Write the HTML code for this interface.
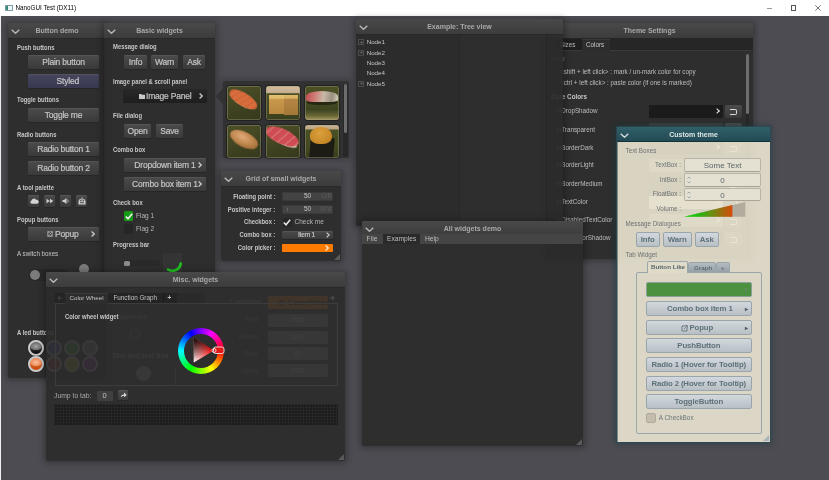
<!DOCTYPE html>
<html><head><meta charset="utf-8">
<style>
*{box-sizing:border-box;margin:0;padding:0}
html,body{width:829px;height:480px;overflow:hidden}
body{position:relative;background:#4d4c52;font-family:"Liberation Sans",sans-serif}
.a{position:absolute}
#tb{position:absolute;left:0;top:0;width:829px;height:16px;background:#fff}
#lb{position:absolute;left:0;top:16px;width:1px;height:464px;background:#f0f0f0}
.w{position:absolute;background:rgba(43,43,43,0.92);border-radius:1.5px;box-shadow:0 0.5px 6px 1.5px rgba(0,0,0,0.3)}
.h{position:absolute;left:0;top:0;right:0;height:15.5px;background:linear-gradient(#494949,#3c3c3c);border-bottom:1px solid #282828;color:#a9a9a9;font-weight:bold;font-size:7px;line-height:15px;text-align:center;border-radius:1.5px 1.5px 0 0;white-space:nowrap}
.chev{position:absolute;left:2.5px;top:5.5px}
.b{position:absolute;background:linear-gradient(#4b4b4b,#3a3a3a);border-radius:1.5px;box-shadow:inset 0 1px 0 rgba(95,95,95,0.55),0 1px 0 #262626;color:#c4c4c4;font-size:8.5px;text-align:center;white-space:nowrap;-webkit-text-stroke:0.2px #c4c4c4;letter-spacing:-0.2px}
.b.sty{background:linear-gradient(#46465f,#383850)}
.b.push{background:linear-gradient(#282828,#1e1e1e);box-shadow:none}
.l{position:absolute;color:#c6c6c6;font-weight:bold;font-size:6.6px;line-height:10px;white-space:nowrap;transform:scaleX(0.89);transform-origin:0 0}
.l.r{font-weight:normal;font-size:7px}
.rt{text-align:right}
.l.rt{transform-origin:100% 0}
.t{position:absolute;white-space:nowrap;line-height:10px}
.txt{color:#b8b8b8;font-size:6.5px}
.led{position:absolute;width:15.5px;height:15.5px;border-radius:50%;border:2px solid #cacaca;box-shadow:0 0 1px 0.5px rgba(0,0,0,0.4)}
.led.dim{border-color:#c8c8c8}
.tbx{position:absolute;background:#434343;border-radius:1px;font-size:6.5px;line-height:8.5px;box-shadow:inset 0 0 0 0.6px #333}
.sb{filter:blur(0.5px)}
.img{position:absolute;width:34px;height:33.5px;border-radius:3px;overflow:hidden;box-shadow:0 0 1px 1px rgba(0,0,0,0.35)}
.img::after{content:"";position:absolute;left:0;top:0;right:0;bottom:0;border-radius:3px;box-shadow:inset 0 0 0 0.8px rgba(160,155,120,0.55)}
.grid{position:absolute;background-color:#1c1c1c;background-image:linear-gradient(90deg,rgba(50,50,50,0.4) 1px,transparent 1px),linear-gradient(rgba(50,50,50,0.4) 1px,transparent 1px);background-size:3px 3px}
.tsl{left:10px;font-size:6.3px;color:#bdbdbd}
.cbx{position:absolute;left:103.2px;width:74.3px;height:13px;border-radius:1px}
.cbx::after{content:"";position:absolute;right:4px;top:4px;width:3px;height:3px;border-right:1.3px solid #e8e8e8;border-top:1.3px solid #e8e8e8;transform:rotate(45deg)}
.rbx{position:absolute;left:178.5px;width:17.5px;height:13.5px;border-radius:2px;background:linear-gradient(#4b4b4b,#3a3a3a)}
.rbx::after{content:"";position:absolute;left:5px;top:4.5px;width:6px;height:4px;border:1.2px solid #d8d8d8;border-left:none;border-radius:0 2px 2px 0}
.pb{position:absolute;width:6px;height:6px;border:0.8px solid #4c4c4c;background:linear-gradient(#606060,#606060) center/3px 0.8px no-repeat,linear-gradient(#606060,#606060) center/0.8px 3px no-repeat}
.tn{left:10.7px;font-size:6.2px;color:#c8c8c8}
.ct{background:rgba(236,230,211,0.9);box-shadow:inset 0.8px 0 0 #6a7a7a,0 0 0 0.8px #2e4850,0 0 5px 2px rgba(20,55,65,0.5)}
.ctl{font-size:6.3px;color:#6c7272}
.ctb{position:absolute;background:#e4e0d2;border:1px solid #b9b4a6;border-bottom-color:#a8a396;border-radius:2px;color:#5a6668}
.spin{position:absolute;left:2.5px;top:2.5px}
.cbt{position:absolute;background:linear-gradient(#d2d8dc,#b8c0c6);border:1px solid #98a6ac;border-radius:2px;color:#5e7078;font-size:7.8px;font-weight:bold;text-align:center;letter-spacing:-0.12px;white-space:nowrap}
</style></head><body>
<div id="root" style="position:absolute;left:0;top:0;width:829px;height:480px;will-change:transform;overflow:hidden">
<div id="tb">
  <div class="a" style="left:5px;top:5px;width:8px;height:5.5px;border:0.8px solid #7f9aa8;background:linear-gradient(90deg,#3a8a70 35%,#f0f4f6 35%)"></div>
  <div class="t" style="left:15.5px;top:2.5px;font-size:6.3px;color:#000">NanoGUI Test (DX11)</div>
  <div class="a" style="left:767px;top:7.5px;width:5px;height:0.9px;background:#9a9a9a"></div>
  <div class="a" style="left:791px;top:5.3px;width:5.3px;height:5.3px;border:0.8px solid #555"></div>
  <svg class="a" style="left:815px;top:5px" width="6" height="6" viewBox="0 0 6 6"><path d="M0.3 0.3 L5.7 5.7 M5.7 0.3 L0.3 5.7" stroke="#555" stroke-width="0.8"/></svg>
</div>
<div id="lb"></div>
<!-- Button demo -->
<div class="w" style="left:8px;top:23px;width:98px;height:355px">
  <div class="h"><svg class="chev" width="9" height="5" viewBox="0 0 9 5"><polyline points="0.7,0.7 4.5,4.3 8.3,0.7" fill="none" stroke="#bcbcbc" stroke-width="1.3"/></svg>Button demo</div>
  <div class="l" style="left:9px;top:19.5px">Push buttons</div>
  <div class="b" style="left:20px;top:32px;width:71px;height:14px;line-height:14px">Plain button</div>
  <div class="b sty" style="left:20px;top:51px;width:71px;height:14px;line-height:14px">&nbsp;&nbsp;&nbsp;&nbsp;Styled</div>
  <div class="l" style="left:9px;top:72px">Toggle buttons</div>
  <div class="b" style="left:20px;top:85px;width:71px;height:14px;line-height:14px">Toggle me</div>
  <div class="l" style="left:9px;top:106.5px">Radio buttons</div>
  <div class="b" style="left:20px;top:119px;width:71px;height:14px;line-height:14px">Radio button 1</div>
  <div class="b" style="left:20px;top:138px;width:71px;height:14px;line-height:14px">Radio button 2</div>
  <div class="l" style="left:9px;top:159.5px">A tool palette</div>
  <div class="b" style="left:20px;top:172px;width:11px;height:12px"><svg class="a" style="left:1.5px;top:3px" width="9" height="6" viewBox="0 0 9 6"><path d="M1.8 5.8 A1.7 1.7 0 0 1 1.6 2.5 A2.4 2.4 0 0 1 6 1.8 A2 2 0 0 1 7.2 5.8 Z" fill="#d4d4d4"/></svg></div>
  <div class="b" style="left:36px;top:172px;width:11px;height:12px"><svg class="a" style="left:2px;top:3px" width="8" height="6" viewBox="0 0 8 6"><path d="M0.5 0.8 L3.8 3 L0.5 5.2Z M4 0.8 L7.3 3 L4 5.2Z" fill="#d0d0d0"/></svg></div>
  <div class="b" style="left:52px;top:172px;width:11px;height:12px"><svg class="a" style="left:2px;top:3px" width="8" height="6" viewBox="0 0 8 6"><path d="M0.5 2 H2 L4.5 0 V6 L2 4 H0.5Z" fill="#d0d0d0"/><path d="M5.5 1.5 Q7 3 5.5 4.5" fill="none" stroke="#aaa" stroke-width="1"/></svg></div>
  <div class="b" style="left:68px;top:172px;width:11px;height:12px"><svg class="a" style="left:1.5px;top:2px" width="8" height="8" viewBox="0 0 8 8"><path d="M0.5 4 L1.8 2 H2.8 V3 H2.3 L1.5 4.3 H6.5 L5.7 3 H5.2 V2 H6.2 L7.5 4 V7.5 H0.5Z M2 5.2 V6.3 H6 V5.2Z" fill="#d4d4d4" fill-rule="evenodd"/><path d="M4 0.3 V3.6 M2.8 2.4 L4 3.6 L5.2 2.4" fill="none" stroke="#d4d4d4" stroke-width="0.9"/></svg></div>
  <div class="l" style="left:9px;top:191.5px">Popup buttons</div>
  <div class="b" style="left:20px;top:204px;width:71px;height:14px;line-height:14px"><svg class="a" style="left:18.8px;top:4px" width="6" height="6" viewBox="0 0 6 6"><path d="M3.2 0.9 H0.9 V5.1 H5.1 V2.8" fill="none" stroke="#aaaaaa" stroke-width="1.1"/><path d="M2.6 3.4 L5.4 0.6 M3.6 0.6 H5.4 V2.4" fill="none" stroke="#aaaaaa" stroke-width="0.9"/></svg><span class="a" style="left:27px;top:0">Popup</span><svg class="a" style="left:63px;top:4px" width="4" height="6" viewBox="0 0 4 6"><polyline points="0.6,0.6 3.2,3 0.6,5.4" fill="none" stroke="#c8c8c8" stroke-width="1.3"/></svg></div>
  <div class="l r" style="left:9px;top:225.5px">A switch boxes</div>
  <div class="a" style="left:20.5px;top:246px;width:40px;height:12px;border-radius:6px;background:#282828"></div>
  <div class="a" style="left:21.5px;top:247px;width:10px;height:10px;border-radius:5px;background:#7c7c7c"></div>
  
  <div class="a" style="left:71px;top:241px;width:10px;height:10px;border-radius:5px;background:#7c7c7c"></div>
  <div class="l" style="left:9px;top:305px">A led buttons</div>
  <div class="led" style="left:20px;top:317px;background:radial-gradient(ellipse 62% 42% at 50% 36%,#a4a4a4,#6c6c6c 75%,transparent 80%),linear-gradient(#5a5a5a,#111 90%)"></div>
  <div class="led" style="left:20px;top:333px;background:radial-gradient(ellipse 62% 42% at 50% 36%,#f8c0a0,#ee8a58 75%,transparent 80%),linear-gradient(#e87838,#c85014 90%)"></div>
  <div class="led dim" style="left:38px;top:317px;background:#4050b0"></div>
  <div class="led dim" style="left:56px;top:317px;background:#40b040"></div>
  <div class="led dim" style="left:74px;top:317px;background:#909090"></div>
  <div class="led dim" style="left:38px;top:333px;background:#c03030"></div>
  <div class="led dim" style="left:56px;top:333px;background:#c0c030"></div>
  <div class="led dim" style="left:74px;top:333px;background:#a030b0"></div>
</div>

<!-- Basic widgets -->
<div class="w" style="left:104px;top:23px;width:111px;height:256px">
  <div class="h"><svg class="chev" width="9" height="5" viewBox="0 0 9 5"><polyline points="0.7,0.7 4.5,4.3 8.3,0.7" fill="none" stroke="#bcbcbc" stroke-width="1.3"/></svg>Basic widgets</div>
  <div class="l" style="left:9px;top:19px">Message dialog</div>
  <div class="b" style="left:20px;top:32px;width:23px;height:14px;line-height:14px">Info</div>
  <div class="b" style="left:47px;top:32px;width:27px;height:14px;line-height:14px">Warn</div>
  <div class="b" style="left:79px;top:32px;width:22px;height:14px;line-height:14px">Ask</div>
  <div class="l" style="left:9px;top:53.5px">Image panel &amp; scroll panel</div>
  <div class="b push" style="left:19px;top:66px;width:84px;height:14px;line-height:14px"><svg class="a" style="left:15.5px;top:4.5px" width="6" height="5" viewBox="0 0 6 5"><path d="M0 0 H2.3 L3 0.8 H6 V5 H0Z" fill="#c8c8c8"/></svg><span class="a" style="left:23px;top:0">Image Panel</span><svg class="a" style="left:76px;top:4px" width="4" height="6" viewBox="0 0 4 6"><polyline points="0.6,0.6 3.2,3 0.6,5.4" fill="none" stroke="#c8c8c8" stroke-width="1.3"/></svg></div>
  <div class="l" style="left:9px;top:88px">File dialog</div>
  <div class="b" style="left:20px;top:101px;width:27px;height:14px;line-height:14px">Open</div>
  <div class="b" style="left:52px;top:101px;width:27px;height:14px;line-height:14px">Save</div>
  <div class="l" style="left:9px;top:122px">Combo box</div>
  <div class="b" style="left:20px;top:135px;width:82px;height:14px;line-height:14px"><span class="a" style="left:0;right:0;top:0">Dropdown item 1</span><svg class="a" style="left:74px;top:4px" width="4" height="6" viewBox="0 0 4 6"><polyline points="0.6,0.6 3.2,3 0.6,5.4" fill="none" stroke="#c8c8c8" stroke-width="1.3"/></svg></div>
  <div class="b" style="left:20px;top:154px;width:82px;height:14px;line-height:14px"><span class="a" style="left:0;right:0;top:0">Combo box item 1</span><svg class="a" style="left:74px;top:4px" width="4" height="6" viewBox="0 0 4 6"><polyline points="0.6,0.6 3.2,3 0.6,5.4" fill="none" stroke="#c8c8c8" stroke-width="1.3"/></svg></div>
  <div class="l" style="left:9px;top:175px">Check box</div>
  <div class="a" style="left:19.5px;top:188px;width:9.5px;height:9.5px;border-radius:1.5px;background:#179a17"><svg class="a" style="left:1px;top:1.5px" width="8" height="7" viewBox="0 0 8 7"><polyline points="0.8,3.5 3,5.8 7.2,0.8" fill="none" stroke="#f0f0f0" stroke-width="1.6"/></svg></div>
  <div class="t txt" style="left:32px;top:187.5px">Flag 1</div>
  <div class="a" style="left:19.5px;top:201px;width:9.5px;height:9.5px;border-radius:1.5px;background:#262626"></div>
  <div class="t txt" style="left:32px;top:200.5px">Flag 2</div>
  <div class="l" style="left:9px;top:217px">Progress bar</div>
  <div class="a" style="left:19.5px;top:237px;width:36px;height:6px;border-radius:3px;background:#292929"></div>
  <div class="a" style="left:19.5px;top:237.5px;width:6.5px;height:5px;border-radius:1.5px;background:#8c8c8c"></div>
  <div class="a" style="left:58.7px;top:230px;width:19.7px;height:26px;background:#343434"></div>
  <svg class="a" style="left:58px;top:230px" width="24" height="22" viewBox="0 0 24 22"><path d="M18.7 10.5 A8.3 8.3 0 0 1 6 16.5" fill="none" stroke="#1fc41f" stroke-width="2.6" stroke-linecap="round"/></svg>
</div>
<!-- Image panel popup -->
<div class="a" style="left:222.5px;top:81px;width:126.5px;height:77px;background:#323232;border-radius:2px;box-shadow:0 0 6px 2px rgba(0,0,0,0.22)"></div>
<svg class="a" style="left:215px;top:88px" width="8" height="17" viewBox="0 0 8 17"><path d="M8 0.5 L0.8 8.3 L8 16.5Z" fill="#323232"/></svg>
<div class="img" style="left:227px;top:86px;background:linear-gradient(160deg,#4c5029,#434622 45%,#35381c)">
  <div class="a sb" style="left:4px;top:12px;width:24px;height:8px;border-radius:50%;background:#b8b098;transform:rotate(30deg)"></div>
  <div class="a sb" style="left:1px;top:7px;width:31px;height:13px;border-radius:45% 55% 50% 50%;background:repeating-linear-gradient(120deg,#d86c3c 0,#d86c3c 3px,#c85e30 4px,#dc7444 5px);transform:rotate(30deg)"></div>
</div>
<div class="img" style="left:266px;top:86px;background:linear-gradient(#d2bc9e 0,#c8b090 19%,#4a5026 23%,#424822 70%,#383e1c)">
  <div class="a sb" style="left:3px;top:9px;width:14.5px;height:19px;background:linear-gradient(#e4c474 0,#dcb868 18%,#c8984c 24%,#b88840)"></div>
  <div class="a sb" style="left:18px;top:9px;width:14px;height:20px;background:linear-gradient(#dcb868 0,#d4b060 16%,#b48444 22%,#a47838)"></div>
</div>
<div class="img" style="left:304.5px;top:86px;background:linear-gradient(#4c5024 0,#464c22 35%,#3e4420 70%,#6a6a38 88%,#a89860)">
  <div class="a sb" style="left:2px;top:13px;width:30px;height:6px;background:#262814;border-radius:40%"></div>
  <div class="a sb" style="left:1px;top:5px;width:32px;height:11px;border-radius:60% 60% 25% 25%;background:linear-gradient(100deg,#c04850 0,#d08078 30%,#c8b8a8 55%,#9a9080 80%,#d8d0c0)"></div>
</div>
<div class="img" style="left:227px;top:124.5px;background:linear-gradient(160deg,#4c5029,#434622 45%,#35381c)">
  <div class="a sb" style="left:2px;top:7px;width:30px;height:15px;border-radius:50% 45% 50% 50%;background:radial-gradient(ellipse at 40% 40%,#e0aa78,#b88048 55%,#80502a);transform:rotate(28deg)"></div>
  
</div>
<div class="img" style="left:266px;top:124.5px;background:linear-gradient(160deg,#4c5029,#434622 45%,#35381c)">
  <div class="a sb" style="left:4px;top:12px;width:28px;height:8px;border-radius:50%;background:#d8ccb8;transform:rotate(24deg)"></div>
  <div class="a sb" style="left:-1px;top:4px;width:35px;height:15px;border-radius:50% 55% 50% 45%;background:repeating-linear-gradient(115deg,#d04c54 0,#d04c54 5px,#d88080 6px,#d04c54 7px);transform:rotate(24deg)"></div>
</div>
<div class="img" style="left:304.5px;top:124.5px;background:linear-gradient(#cdb696 0,#bca684 11%,#4a5024 16%,#424822 70%,#383e1c)">
  <div class="a sb" style="left:5px;top:13px;width:24px;height:20px;background:#1c1c14;border-radius:2px 2px 0 0;transform:skewX(-5deg)"></div>
  <div class="a sb" style="left:5px;top:2px;width:22px;height:17px;border-radius:50% 50% 40% 40%;background:radial-gradient(ellipse at 45% 35%,#dca040,#c88a28 65%,#b07420)"></div>
</div>
<div class="a" style="left:343px;top:83.5px;width:4.5px;height:73px;border-radius:2px;background:#282828"></div>
<div class="a" style="left:343.5px;top:84px;width:3.5px;height:48.5px;border-radius:2px;background:#6e6e6e"></div>

<!-- Grid of small widgets -->
<div class="w" style="left:221px;top:171px;width:120px;height:90px">
  <div class="h"><svg class="chev" width="9" height="5" viewBox="0 0 9 5"><polyline points="0.7,0.7 4.5,4.3 8.3,0.7" fill="none" stroke="#bcbcbc" stroke-width="1.3"/></svg>Grid of small widgets</div>
  <div class="l rt" style="right:65.5px;top:20.5px">Floating point :</div>
  <div class="tbx" style="left:61px;top:21px;width:50.5px;height:8.5px"><span class="a" style="left:22px;top:0;color:#c8c8c8">50</span><span class="a" style="left:39px;top:0;color:#5a5a5a">GiB</span></div>
  <div class="l rt" style="right:65.5px;top:33.5px">Positive integer :</div>
  <div class="tbx" style="left:61px;top:34px;width:50.5px;height:8.5px"><span class="a" style="left:4px;top:0;color:#8a8a8a;font-size:6px">&#x2195;</span><span class="a" style="left:22px;top:0;color:#c8c8c8">50</span><span class="a" style="left:38px;top:0;color:#5a5a5a">Mhz</span></div>
  <div class="l rt" style="right:65.5px;top:46px">Checkbox :</div>
  <div class="a" style="left:61.5px;top:46.5px;width:9px;height:9px;border-radius:1.5px;background:#262626"><svg class="a" style="left:0.5px;top:1px" width="8" height="7" viewBox="0 0 8 7"><polyline points="0.8,3.5 3,5.8 7.2,0.8" fill="none" stroke="#e8e8e8" stroke-width="1.6"/></svg></div>
  <div class="t txt" style="left:73.5px;top:46px;font-size:6.5px">Check me</div>
  <div class="l rt" style="right:65.5px;top:59px">Combo box :</div>
  <div class="b" style="left:61px;top:59.5px;width:51px;height:8.5px;line-height:8.5px;font-size:6.5px"><span class="a" style="left:16px;top:0">Item 1</span><svg class="a" style="left:44px;top:1.5px" width="4" height="6" viewBox="0 0 4 6"><polyline points="0.6,0.6 3.2,3 0.6,5.4" fill="none" stroke="#c8c8c8" stroke-width="1.2"/></svg></div>
  <div class="l rt" style="right:65.5px;top:71.5px">Color picker :</div>
  <div class="a" style="left:61px;top:72.5px;width:51px;height:8.5px;border-radius:1px;background:#ff7b00"><svg class="a" style="left:43px;top:1.5px" width="4" height="6" viewBox="0 0 4 6"><polyline points="0.6,0.6 3.2,3 0.6,5.4" fill="none" stroke="#ffe8d0" stroke-width="1.3"/></svg></div>
  <svg class="a" style="right:1px;bottom:1px" width="6" height="6" viewBox="0 0 6 6"><path d="M6 0 V6 H0Z" fill="#5a5a5a"/></svg>
</div>
<!-- Misc widgets -->
<div class="w" style="left:46px;top:272px;width:299px;height:189px">
  <div class="h"><svg class="chev" width="9" height="5" viewBox="0 0 9 5"><polyline points="0.7,0.7 4.5,4.3 8.3,0.7" fill="none" stroke="#bcbcbc" stroke-width="1.3"/></svg>Misc. widgets</div>
  <!-- ghost content -->
  <div class="a" style="left:0;top:0;width:299px;height:189px;opacity:0.085">
    <div class="a" style="left:222px;top:24px;width:59.5px;height:13px;background:#ff8c00;border-radius:2px"></div>
    <div class="t" style="left:232px;top:25.5px;font-size:8px;font-weight:bold;color:#000">&#x25CE; ColorWheel</div>
    <div class="t txt" style="left:183.6px;top:24.7px;font-size:7px;color:#fff;opacity:0.7">Combined</div>
    <div class="a" style="left:222.2px;top:41.8px;width:59.8px;height:13px;background:#999;border-radius:2px"></div>
    <div class="a" style="left:222.2px;top:58.8px;width:59.8px;height:13px;background:#999;border-radius:2px"></div>
    <div class="a" style="left:222.2px;top:75px;width:59.8px;height:13px;background:#999;border-radius:2px"></div>
    <div class="a" style="left:222.2px;top:92.4px;width:59.8px;height:13px;background:#999;border-radius:2px"></div>
    <div class="t rt" style="right:87px;top:43px;font-size:7px;color:#fff;opacity:0.55">Red</div>
    <div class="t rt" style="right:87px;top:60px;font-size:7px;color:#fff;opacity:0.55">Green</div>
    <div class="t rt" style="right:87px;top:76.5px;font-size:7px;color:#fff;opacity:0.55">Blue</div>
    <div class="t rt" style="right:87px;top:93.5px;font-size:7px;color:#fff;opacity:0.55">Alpha</div>
    <div class="t" style="left:244.4px;top:43px;font-size:8px;color:#fff">255</div>
    <div class="t" style="left:244.4px;top:60px;font-size:8px;color:#fff">120</div>
    <div class="t" style="left:249px;top:76.5px;font-size:8px;color:#fff">0</div>
    <div class="t" style="left:244.4px;top:93.5px;font-size:8px;color:#fff">255</div>
    <div class="t" style="left:66.8px;top:79px;font-size:7px;font-weight:bold;color:#fff;opacity:0.6">Dial and text box</div>
    <div class="t" style="left:71px;top:39.5px;font-size:7px;font-weight:bold;color:#fff;opacity:0.5">Spinners</div>
    <div class="a" style="left:89.9px;top:94px;width:15px;height:15px;border-radius:50%;background:#aaa"></div>
    <div class="a" style="left:84px;top:56.8px;width:10px;height:10px;border-radius:50%;border:1px solid #fff;opacity:0.4"></div>
    <div class="a" style="left:128.8px;top:96px;width:0;height:18px;border-left:1px solid #fff;opacity:0.4"></div>
  </div>
  <!-- tab strip -->
  <div class="a" style="left:8.5px;top:21px;width:122px;height:10px;background:#242424"></div>
  <div class="a" style="left:19px;top:21px;width:43px;height:10.5px;background:#2d2d2d;border-top:1px solid #3a3a3a"></div>
  <div class="a" style="left:8.5px;top:31px;width:283px;height:83px;border:1px solid #3c3c3c;border-top-color:#3c3c3c"></div>
  <div class="a" style="left:19px;top:30.5px;width:43px;height:2px;background:#2d2d2d"></div>
  <svg class="a" style="left:11px;top:23px" width="6" height="6" viewBox="0 0 6 6"><path d="M5.5 3 H1 M3 1 L1 3 L3 5" fill="none" stroke="#3e3e3e" stroke-width="1.2"/></svg>
  <div class="t txt" style="left:23.5px;top:20.5px;font-size:6.2px;color:#c4c4c4">Color Wheel</div>
  <div class="t txt" style="left:67.5px;top:20.5px;font-size:6.3px;color:#c4c4c4">Function Graph</div>
  <div class="a" style="left:116.5px;top:21px;width:0.7px;height:10px;background:#1a1a1a"></div>
  <div class="a" style="left:130.7px;top:21px;width:28px;height:10px;background:rgba(0,0,0,0.06)"></div><div class="t txt" style="left:121.5px;top:20.5px;font-size:6.5px;color:#c4c4c4;font-weight:bold">+</div>
  <svg class="a" style="left:283px;top:23px" width="6" height="6" viewBox="0 0 6 6"><path d="M0.5 3 H5 M3 1 L5 3 L3 5" fill="none" stroke="#4a4a4a" stroke-width="1.2"/></svg>
  <div class="l" style="left:18.5px;top:39.5px">Color wheel widget</div>
  <!-- color wheel -->
  <div class="a" style="left:131.8px;top:55.5px;width:46px;height:46px;border-radius:50%;background:conic-gradient(from 90deg,#f00,#ff0 60deg,#0f0 120deg,#0ff 180deg,#00f 240deg,#f0f 300deg,#f00 360deg)"></div>
  <div class="a" style="left:137.8px;top:61.5px;width:34px;height:34px;border-radius:50%;background:#2d2d2d"></div>
  <svg class="a" style="left:130px;top:54px" width="60" height="50" viewBox="0 0 60 50">
    <defs>
      <linearGradient id="tg1" gradientUnits="userSpaceOnUse" x1="38" y1="24.5" x2="17.7" y2="36.5"><stop offset="0" stop-color="#ff0000"/><stop offset="1" stop-color="#ffffff"/></linearGradient>
      <linearGradient id="tg2" gradientUnits="userSpaceOnUse" x1="27.85" y1="30.5" x2="17.7" y2="11.5"><stop offset="0" stop-color="#000" stop-opacity="0"/><stop offset="1" stop-color="#000" stop-opacity="1"/></linearGradient>
    </defs>
    <path d="M17.7 11.5 L17.7 36.5 L38 24.5Z" fill="url(#tg1)"/>
    <path d="M17.7 11.5 L17.7 36.5 L38 24.5Z" fill="url(#tg2)"/>
    <rect x="37.5" y="21" width="10.5" height="6.5" rx="2" fill="#e01818" stroke="#e8e8e8" stroke-width="0.9"/>
    <circle cx="38" cy="24.5" r="2" fill="none" stroke="#e8e8e8" stroke-width="0.9"/>
  </svg>
  <!-- jump to tab -->
  <div class="t txt" style="left:8px;top:118.5px;font-size:6.8px;color:#a8a8a8">Jump to tab:</div>
  <div class="a" style="left:50.5px;top:119px;width:16.3px;height:9.5px;background:#404040;border-radius:1px"></div>
  <div class="t txt" style="left:56.5px;top:119px;font-size:7.5px;color:#c0c0c0">0</div>
  <div class="b" style="left:71.7px;top:118px;width:10.6px;height:10px"><svg class="a" style="left:2px;top:1.5px" width="7" height="6" viewBox="0 0 7 6"><path d="M0.8 5.5 Q0.8 2.5 4 2.5 V0.5 L6.8 3 L4 5.3 V3.8 Q1.8 3.8 0.8 5.5Z" fill="#d8d8d8"/></svg></div>
  <div class="grid" style="left:8px;top:132px;width:284px;height:21px"></div>
  <svg class="a" style="right:1px;bottom:1px" width="6" height="6" viewBox="0 0 6 6"><path d="M6 0 V6 H0Z" fill="#5a5a5a"/></svg>
</div>
<!-- Theme settings -->
<div class="w" style="left:546px;top:23px;width:207px;height:236px">
  <div class="h">Theme Settings</div>
  <div class="a" style="left:0;top:15px;width:207px;height:12px;background:#262626"></div>
  <div class="a" style="left:10px;top:16px;width:25.5px;height:11px;background:#1f1f1f"></div>
  <div class="a" style="left:35.5px;top:16px;width:28px;height:12px;background:#2d2d2d;border-top:1px solid #3a3a3a"></div>
  <div class="a" style="left:3px;top:27px;width:202px;height:1px;background:#3a3a3a"></div>
  <div class="a" style="left:35.5px;top:27px;width:28px;height:1px;background:#2d2d2d"></div>
  <div class="t txt" style="left:14px;top:16.5px;font-size:6.3px;color:#bdbdbd">Sizes</div>
  <div class="t txt" style="left:40px;top:16.5px;font-size:6.3px;color:#c8c8c8">Colors</div>
  <div class="t txt" style="left:5px;top:30.8px;font-size:6.3px;color:#6a6a6a;font-weight:bold">Help</div>
  <div class="t txt" style="left:14px;top:44px;font-size:6.3px;color:#bdbdbd">&lt;shift + left click&gt; : mark / un-mark color for copy</div>
  <div class="t txt" style="left:14px;top:54.5px;font-size:6.3px;color:#bdbdbd">&lt;ctrl + left click&gt; : paste color (if one is marked)</div>
  <div class="t txt" style="left:5px;top:68.7px;font-size:6.3px;color:#c8c8c8;font-weight:bold">Core Colors</div>
  <div class="t txt tsl" style="top:83.3px">mDropShadow</div>
  <div class="t txt tsl" style="top:101.5px">mTransparent</div>
  <div class="t txt tsl" style="top:119.5px">mBorderDark</div>
  <div class="t txt tsl" style="top:137px">mBorderLight</div>
  <div class="t txt tsl" style="top:155.6px">mBorderMedium</div>
  <div class="t txt tsl" style="top:173.9px">mTextColor</div>
  <div class="t txt tsl" style="top:192px">mDisabledTextColor</div>
  <div class="t txt tsl" style="top:210.3px">mTextColorShadow</div>
  <div class="cbx" style="top:81.7px;background:#1b1b1b"></div>
  <div class="cbx" style="top:99.9px;background:#3c3c3c"></div>
  <div class="cbx" style="top:118px;background:#1d1d1d"></div>
  <div class="cbx" style="top:136px;background:#5c5c5c"></div>
  <div class="cbx" style="top:154.5px;background:#232323"></div>
  <div class="cbx" style="top:172.8px;background:#a8a8a8"></div>
  <div class="cbx" style="top:191px;background:#6a6a6a"></div>
  <div class="cbx" style="top:209.3px;background:#141414"></div>
  <div class="rbx" style="top:81.7px"></div>
  <div class="rbx" style="top:99.9px"></div>
  <div class="rbx" style="top:118px"></div>
  <div class="rbx" style="top:136px"></div>
  <div class="rbx" style="top:154.5px"></div>
  <div class="rbx" style="top:172.8px"></div>
  <div class="rbx" style="top:191px"></div>
  <div class="rbx" style="top:209.3px"></div>
  <div class="a" style="left:199.5px;top:31px;width:3.5px;height:203px;border-radius:2px;background:#262626"></div>
  <div class="a" style="left:199.5px;top:31px;width:3.5px;height:60px;border-radius:2px;background:#6e6e6e"></div>
</div>

<!-- Tree view -->
<div class="w" style="left:356px;top:19px;width:207px;height:207px">
  <div class="h"><svg class="chev" width="9" height="5" viewBox="0 0 9 5"><polyline points="0.7,0.7 4.5,4.3 8.3,0.7" fill="none" stroke="#bcbcbc" stroke-width="1.3"/></svg>Example: Tree view</div>
  <div class="a" style="left:0;top:16px;width:103px;height:191px;background:rgba(0,0,0,0.04)"></div>
  <div class="a" style="left:103px;top:16px;width:1px;height:191px;background:rgba(0,0,0,0.12)"></div>
  <div class="a" style="left:190px;top:16px;width:1px;height:191px;background:rgba(0,0,0,0.12)"></div>
  <div class="pb" style="left:2.3px;top:20.3px"></div>
  <div class="t txt tn" style="top:18.3px">Node1</div>
  <div class="pb" style="left:2.3px;top:30.7px"></div>
  <div class="t txt tn" style="top:28.7px">Node2</div>
  <div class="t txt tn" style="top:39px">Node3</div>
  <div class="t txt tn" style="top:49.3px">Node4</div>
  <div class="pb" style="left:2.3px;top:61.7px"></div>
  <div class="t txt tn" style="top:59.7px">Node5</div>
</div>

<!-- All widgets demo -->
<div class="w" style="left:362px;top:221px;width:221px;height:225px">
  <div class="h"><svg class="chev" width="9" height="5" viewBox="0 0 9 5"><polyline points="0.7,0.7 4.5,4.3 8.3,0.7" fill="none" stroke="#bcbcbc" stroke-width="1.3"/></svg>All widgets demo</div>
  <div class="a" style="left:0;top:13px;width:221px;height:9.5px;background:#454545"></div>
  <div class="a" style="left:20.5px;top:13px;width:37.5px;height:9.5px;background:#2a2a2a"></div>
  <div class="t txt" style="left:4.6px;top:13px;font-size:6.7px;color:#bdbdbd">File</div>
  <div class="t txt" style="left:25px;top:13px;font-size:6.7px;color:#bdbdbd">Examples</div>
  <div class="t txt" style="left:63px;top:13px;font-size:6.7px;color:#bdbdbd">Help</div>
  <svg class="a" style="right:1px;bottom:1px" width="6" height="6" viewBox="0 0 6 6"><path d="M6 0 V6 H0Z" fill="#5a5a5a"/></svg>
</div>
<!-- Custom theme -->
<div class="w ct" style="left:617px;top:127px;width:153px;height:315px;border-radius:0">
  <div class="h" style="height:14.5px;border-radius:0;background:linear-gradient(#30606a,#234a54);border-bottom:1px solid #12323a;color:#dce6e6"><svg class="chev" width="9" height="5" viewBox="0 0 9 5"><polyline points="0.7,0.7 4.5,4.3 8.3,0.7" fill="none" stroke="#d4dede" stroke-width="1.3"/></svg>Custom theme</div>
  <div class="t ctl" style="left:8.5px;top:18.8px">Text Boxes</div>
  <div class="t ctl rt" style="right:89px;top:33px">TextBox :</div>
  <div class="ctb" style="left:66.8px;top:31.4px;width:77.6px;height:13.5px"><span class="a" style="left:0;right:0;top:0;text-align:center;font-size:8px;line-height:13px">Some Text</span></div>
  <div class="t ctl rt" style="right:89px;top:47.5px">IntBox :</div>
  <div class="ctb" style="left:66.8px;top:45.9px;width:77.6px;height:13.8px"><svg class="spin" width="4" height="8" viewBox="0 0 4 8"><path d="M0.5 2.5 L2 1 L3.5 2.5 M0.5 5.5 L2 7 L3.5 5.5" fill="none" stroke="#8a9aa0" stroke-width="0.8"/></svg><span class="a" style="left:0;right:0;top:0;text-align:center;font-size:8px;line-height:13px">0</span></div>
  <div class="t ctl rt" style="right:89px;top:61.8px">FloatBox :</div>
  <div class="ctb" style="left:66.8px;top:60.7px;width:77.6px;height:13.3px"><svg class="spin" width="4" height="8" viewBox="0 0 4 8"><path d="M0.5 2.5 L2 1 L3.5 2.5 M0.5 5.5 L2 7 L3.5 5.5" fill="none" stroke="#8a9aa0" stroke-width="0.8"/></svg><span class="a" style="left:0;right:0;top:0;text-align:center;font-size:8px;line-height:13px">0</span></div>
  <div class="t ctl rt" style="right:89px;top:77.4px">Volume :</div>
  <svg class="a" style="left:66px;top:74px" width="64" height="17" viewBox="0 0 64 17">
    <defs><linearGradient id="vg" x1="0" y1="0" x2="1" y2="0"><stop offset="0" stop-color="#00e600"/><stop offset="0.35" stop-color="#30b010"/><stop offset="0.7" stop-color="#8a7a10"/><stop offset="1" stop-color="#d84a08"/></linearGradient></defs>
    <path d="M1 15.8 L62.4 1 V15.8Z" fill="#b2ac9e"/>
    <path d="M1 15.8 L49.4 4.1 V15.8Z" fill="url(#vg)"/>
  </svg>
  <div class="t ctl" style="left:8.5px;top:92.3px">Message Dialogues</div>
  <div class="cbt" style="left:18.6px;top:104.5px;width:24.2px;height:15px;line-height:14.5px">Info</div>
  <div class="cbt" style="left:45.9px;top:104.5px;width:28.7px;height:15px;line-height:14.5px">Warn</div>
  <div class="cbt" style="left:77.7px;top:104.5px;width:24px;height:15px;line-height:14.5px">Ask</div>
  <div class="t ctl" style="left:8.5px;top:122.5px">Tab Widget</div>
  <div class="a" style="left:18.5px;top:145px;width:126.2px;height:161.5px;border:1px solid #9aa6aa;border-radius:2px"></div>
  <div class="a" style="left:29.5px;top:134px;width:41.8px;height:12px;background:#e0dbc9;border:1px solid #9aa6aa;border-bottom:none;border-radius:2px 2px 0 0"></div>
  <div class="a" style="left:71.3px;top:135px;width:27.9px;height:10.5px;background:linear-gradient(#b4bcc0,#959fa4);border:1px solid #9aa6aa;border-radius:2px 2px 0 0"></div>
  <div class="a" style="left:99.2px;top:135px;width:14.2px;height:10.5px;background:linear-gradient(#b4bcc0,#959fa4);border:1px solid #9aa6aa;border-radius:2px 2px 0 0"></div>
  <div class="t" style="left:34px;top:135px;font-size:6.2px;font-weight:bold;color:#56666c;line-height:10px">Button Like</div>
  <div class="t" style="left:77px;top:135.5px;font-size:6.2px;font-weight:bold;color:#5e6e74;line-height:10px">Graph</div>
  <div class="t" style="left:104px;top:136px;font-size:6px;font-weight:bold;color:#5e6e74;line-height:10px">+</div>
  <div class="a" style="left:29px;top:155px;width:105.6px;height:15px;background:#4b9140;border:1px solid #8aa096;border-radius:2px"><span class="a" style="right:3px;top:2px;font-size:6px;color:#6a8a6a">&#x25B8;</span></div>
  <div class="cbt" style="left:29px;top:174.3px;width:105.6px;height:14.7px;line-height:14px"><span class="a" style="left:0;right:0;text-align:center">&nbsp;Combo box item 1</span><span class="a" style="right:3px;top:0;font-size:6px;color:#4e5e64">&#x25B8;</span></div>
  <div class="cbt" style="left:29px;top:193px;width:105.6px;height:14.7px;line-height:14px"><svg class="a" style="left:33.5px;top:3.5px" width="7" height="7" viewBox="0 0 7 7"><path d="M4 1 H1 V6 H6 V3" fill="none" stroke="#6a7a80" stroke-width="1"/><path d="M3 4 L6.3 0.7 M4 0.6 H6.4 V3" fill="none" stroke="#6a7a80" stroke-width="0.9"/></svg><span class="a" style="left:42.5px">Popup</span><span class="a" style="right:3px;top:0;font-size:6px;color:#4e5e64">&#x25B8;</span></div>
  <div class="cbt" style="left:29px;top:211.4px;width:105.6px;height:15px;line-height:14.5px">PushButton</div>
  <div class="cbt" style="left:29px;top:230.3px;width:105.6px;height:14.6px;line-height:14px">Radio 1 (Hover for Tooltip)</div>
  <div class="cbt" style="left:29px;top:249px;width:105.6px;height:14.6px;line-height:14px">Radio 2 (Hover for Tooltip)</div>
  <div class="cbt" style="left:29px;top:267.4px;width:105.6px;height:15px;line-height:14.5px">ToggleButton</div>
  <div class="a" style="left:29.3px;top:286px;width:9.7px;height:10px;border-radius:2px;background:#c4bcac;border:1px solid #b0a898"></div>
  <div class="t" style="left:41.8px;top:286px;font-size:6.4px;color:#6a767a;line-height:10px">A CheckBox</div>
  <svg class="a" style="right:1px;bottom:1px" width="6" height="6" viewBox="0 0 6 6"><path d="M6 0 V6 H0Z" fill="#a8b4b8"/></svg>
</div>
</div>
</body></html>
